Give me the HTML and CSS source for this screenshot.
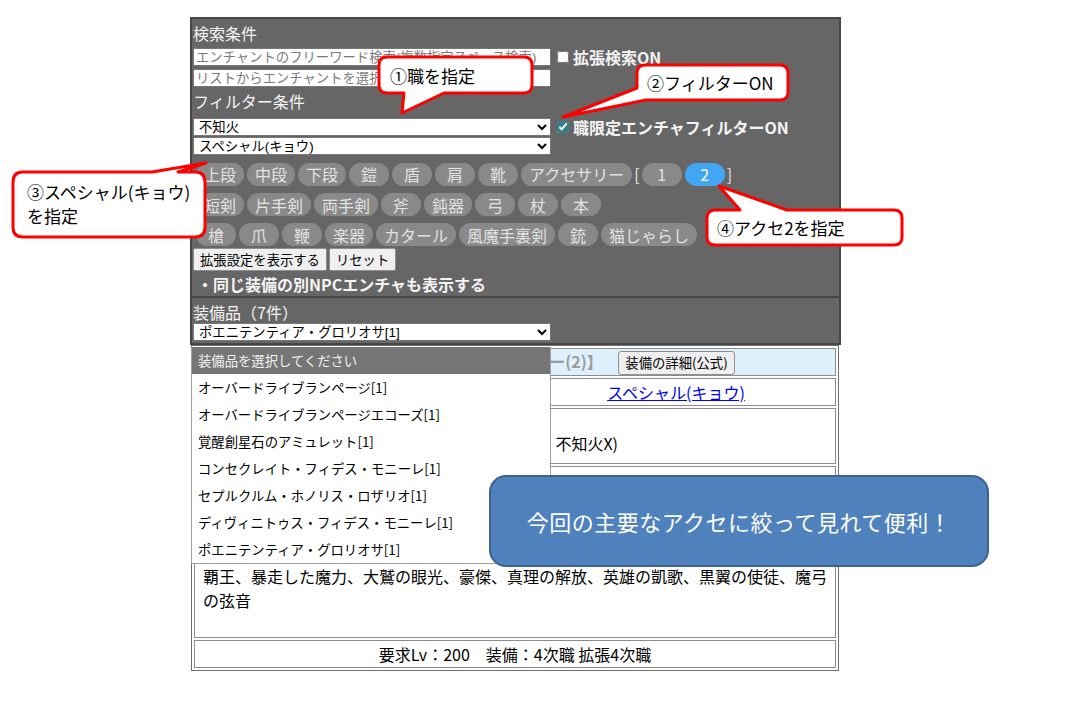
FILE: index.html
```html
<!DOCTYPE html>
<html lang="ja">
<head>
    <meta charset="UTF-8">
    <meta name="viewport" content="width=device-width, initial-scale=1.0">
    <title>エンチャント検索</title>
    <link rel="stylesheet" href="styles.css">
</head>
<body>
    <div class="page">
        <div class="search-box">
            <div class="box-title">検索条件</div>
            <div class="field-row">
                <input type="text" class="text-input" placeholder="エンチャントのフリーワード検索(複数指定スペース検索)">
                <label class="check-label"><input type="checkbox" class="check">拡張検索ON</label>
            </div>
            <div class="field-row second">
                <input type="text" class="text-input" placeholder="リストからエンチャントを選択">
            </div>
            <div class="box-title filter-title">フィルター条件</div>
            <div class="field-row select-first">
                <select class="select"><option>不知火</option></select>
                <label class="check-label"><input type="checkbox" class="check" checked>職限定エンチャフィルターON</label>
            </div>
            <div class="field-row select-second">
                <select class="select"><option>スペシャル(キョウ)</option></select>
            </div>
            <div class="pill-row">
                <span class="pill">上段</span>
                <span class="pill">中段</span>
                <span class="pill">下段</span>
                <span class="pill">鎧</span>
                <span class="pill">盾</span>
                <span class="pill">肩</span>
                <span class="pill">靴</span>
                <span class="pill">アクセサリー</span>
                <span class="bracket">[</span>
                <span class="pill">1</span>
                <span class="pill active">2</span>
                <span class="bracket">]</span>
            </div>
            <div class="pill-row">
                <span class="pill">短剣</span>
                <span class="pill">片手剣</span>
                <span class="pill">両手剣</span>
                <span class="pill">斧</span>
                <span class="pill">鈍器</span>
                <span class="pill">弓</span>
                <span class="pill">杖</span>
                <span class="pill">本</span>
            </div>
            <div class="pill-row">
                <span class="pill">槍</span>
                <span class="pill">爪</span>
                <span class="pill">鞭</span>
                <span class="pill">楽器</span>
                <span class="pill">カタール</span>
                <span class="pill">風魔手裏剣</span>
                <span class="pill">銃</span>
                <span class="pill">猫じゃらし</span>
            </div>
            <div class="button-row">
                <button class="plain-button">拡張設定を表示する</button>
                <button class="plain-button">リセット</button>
            </div>
            <div class="option-note">・同じ装備の別NPCエンチャも表示する</div>
        </div>
        <div class="items-box">
            <div class="box-title">装備品（7件）</div>
            <select class="select"><option>ポエニテンティア・グロリオサ[1]</option></select>
        </div>

        <table class="detail">
            <tr>
                <td colspan="2" class="head-cell">
                    <span class="slot-name">【アクセサリー(2)】</span>
                    <button class="plain-button detail-button">装備の詳細(公式)</button>
                </td>
            </tr>
            <tr>
                <td class="label-cell"></td>
                <td class="npc-cell"><a href="#">スペシャル(キョウ)</a></td>
            </tr>
            <tr>
                <td class="label-cell"></td>
                <td class="job-cell">(職：不知火X)</td>
            </tr>
            <tr>
                <td colspan="2" class="blank-cell"></td>
            </tr>
            <tr>
                <td colspan="2" class="enchant-cell">覇王、暴走した魔力、大鷲の眼光、豪傑、真理の解放、英雄の凱歌、黒翼の使徒、魔弓の弦音</td>
            </tr>
            <tr>
                <td colspan="2" class="req-cell">要求Lv：200　装備：4次職 拡張4次職</td>
            </tr>
        </table>
    </div>

    <!-- open list of the equipment select -->
    <div class="dropdown">
        <div class="dropdown-item current">装備品を選択してください</div>
        <div class="dropdown-item">オーバードライブランページ[1]</div>
        <div class="dropdown-item">オーバードライブランページエコーズ[1]</div>
        <div class="dropdown-item">覚醒創星石のアミュレット[1]</div>
        <div class="dropdown-item">コンセクレイト・フィデス・モニーレ[1]</div>
        <div class="dropdown-item">セプルクルム・ホノリス・ロザリオ[1]</div>
        <div class="dropdown-item">ディヴィニトゥス・フィデス・モニーレ[1]</div>
        <div class="dropdown-item">ポエニテンティア・グロリオサ[1]</div>
    </div>

    <!-- annotation balloons -->
    <svg class="balloons" viewBox="0 0 1075 707">
        <path d="M387,57 H524 Q532,57 532,65 V85 Q532,93 524,93 H444 L402,113 L404,93 H387 Q379,93 379,85 V65 Q379,57 387,57 Z"/>
        <path d="M645,65 H780 Q788,65 788,73 V92 Q788,100 780,100 H646 L563,117 L637,88 V73 Q637,65 645,65 Z"/>
        <path d="M23,172 H152 L206,163 L178,172 H195 Q205,172 205,182 V227 Q205,237 195,237 H23 Q13,237 13,227 V182 Q13,172 23,172 Z"/>
        <path d="M715,210 H740 L719,186 L787,210 H894 Q902,210 902,218 V237 Q902,245 894,245 H715 Q707,245 707,237 V218 Q707,210 715,210 Z"/>
    </svg>
    <div class="note note-job">①職を指定</div>
    <div class="note note-filter">②フィルターON</div>
    <div class="note note-npc">③スペシャル(キョウ)<br>を指定</div>
    <div class="note note-acc">④アクセ2を指定</div>
    <div class="summary">今回の主要なアクセに絞って見れて便利！</div>
</body>
</html>
```
FILE: styles.css
```css
html, body {
    margin: 0;
    background-color: #ffffff;
    color: #000000;
    font-family: "Noto Sans CJK JP", "Noto Sans", sans-serif;
}
.page {
    width: 651px;
    margin: 17px 0 0 190px;
}
.search-box {
    background-color: #666666;
    border: 2px solid #474747;
    padding: 3px 1px 1px 1px;
}
.items-box {
    background-color: #666666;
    border: 2px solid #474747;
    border-top: none;
    padding: 3px 1px 2px 1px;
}
.box-title {
    font-size: 16px;
    line-height: 22px;
    color: #f4f4f4;
}
.search-box > .box-title {
    margin-bottom: 4px;
}
.search-box > .filter-title {
    margin-top: 3px;
    margin-bottom: 6px;
}
.field-row {
    display: flex;
    align-items: center;
    height: 18px;
}
.field-row.second {
    margin-top: 3px;
}
.field-row.select-second {
    margin-top: 1px;
}
.text-input {
    width: 358px;
    height: 18px;
    box-sizing: border-box;
    border: 1px solid #767676;
    padding: 0 2px;
    font-family: "Liberation Sans", "Noto Sans CJK JP", sans-serif;
    font-size: 13.33px;
    background-color: #ffffff;
}
.text-input::placeholder {
    color: #7a7a7a;
}
.select {
    width: 358px;
    height: 18px;
    box-sizing: border-box;
    border: 1px solid #767676;
    padding: 0 1px;
    font-family: "Liberation Sans", "Noto Sans CJK JP", sans-serif;
    font-size: 13.33px;
    background-color: #ffffff;
    color: #000000;
    display: block;
}
.check-label {
    display: flex;
    align-items: center;
    font-size: 16px;
    font-weight: bold;
    color: #f4f4f4;
    white-space: nowrap;
}
.check {
    width: 12px;
    height: 12px;
    margin: 0 4px 0 6px;
    accent-color: #357e8a;
}
.pill-row {
    display: flex;
    align-items: center;
    gap: 3px;
    padding-left: 3px;
    margin-top: 7px;
}
.pill {
    display: inline-flex;
    align-items: center;
    justify-content: center;
    height: 23px;
    min-width: 40px;
    box-sizing: border-box;
    padding: 0 8px;
    border-radius: 12px;
    background-color: #898989;
    color: #e2e2e2;
    font-size: 16px;
    white-space: nowrap;
}
.pill.active {
    background-color: #42a6f3;
    color: #ffffff;
}
.bracket {
    color: #e8e8e8;
    font-size: 16px;
    margin: 0 -1px;
}
.button-row {
    display: flex;
    gap: 2px;
    margin-top: 2px;
}
.plain-button {
    height: 23px;
    box-sizing: border-box;
    padding: 0 6px;
    font-family: inherit;
    font-size: 13.33px;
    color: #000000;
    background-color: #efefef;
    border: 1px solid #8f8f8f;
    border-radius: 2px;
}
.option-note {
    margin-top: 2px;
    font-size: 16px;
    line-height: 22px;
    font-weight: bold;
    color: #f4f4f4;
    padding-left: 4px;
}
.detail {
    width: 648px;
    margin-left: 1px;
    border: 1px solid #6e6e6e;
    border-spacing: 2px;
    font-size: 16px;
}
.detail td {
    box-sizing: border-box;
    border: 1px solid #8c8c8c;
    padding: 0;
}
.head-cell {
    height: 28px;
    background-color: #ddf0fb;
    padding-left: 259px !important;
}
.slot-name {
    font-weight: bold;
    color: #9b9b9b;
}
.detail-button {
    margin-left: 12px;
    height: 24px;
    border-radius: 3px;
}
.label-cell {
    width: 50%;
    height: 28px;
}
.npc-cell {
    height: 28px;
    text-align: center;
}
.npc-cell a {
    color: #0000ee;
}
.job-cell {
    height: 56px;
    vertical-align: bottom;
    line-height: 24px;
    padding: 0 0 8px 1px !important;
}
.blank-cell {
    height: 92px;
}
.enchant-cell {
    height: 78px;
    vertical-align: top;
    line-height: 24px;
    padding: 3px 2px 0 8px !important;
}
.req-cell {
    height: 28px;
    text-align: center;
}
.dropdown {
    position: absolute;
    left: 191px;
    top: 347px;
    width: 360px;
    box-sizing: border-box;
    background-color: #ffffff;
    border: 1px solid #a0a0a0;
    border-top: none;
}
.dropdown-item {
    height: 27px;
    line-height: 27px;
    padding-left: 6px;
    font-size: 13.33px;
    color: #000000;
}
.dropdown-item.current {
    background-color: #767676;
    color: #f2f2f2;
}
.balloons {
    position: absolute;
    left: 0;
    top: 0;
    width: 1075px;
    height: 707px;
    pointer-events: none;
}
.balloons path {
    fill: #ffffff;
    stroke: #ff0000;
    stroke-width: 3;
    stroke-linejoin: round;
}
.note {
    position: absolute;
    font-size: 17px;
    line-height: 20px;
    color: #000000;
    white-space: nowrap;
}
.note-job {
    left: 390px;
    top: 66px;
}
.note-filter {
    left: 647px;
    top: 73px;
}
.note-npc {
    left: 27px;
    top: 180px;
    line-height: 24px;
}
.note-acc {
    left: 717px;
    top: 218px;
}
.summary {
    position: absolute;
    left: 489px;
    top: 475px;
    width: 500px;
    height: 92px;
    box-sizing: border-box;
    display: flex;
    align-items: center;
    justify-content: center;
    background-color: #4f81bd;
    border: 2px solid #3d6392;
    border-radius: 17px;
    color: #ffffff;
    font-size: 22px;
    letter-spacing: 0.5px;
}
```
